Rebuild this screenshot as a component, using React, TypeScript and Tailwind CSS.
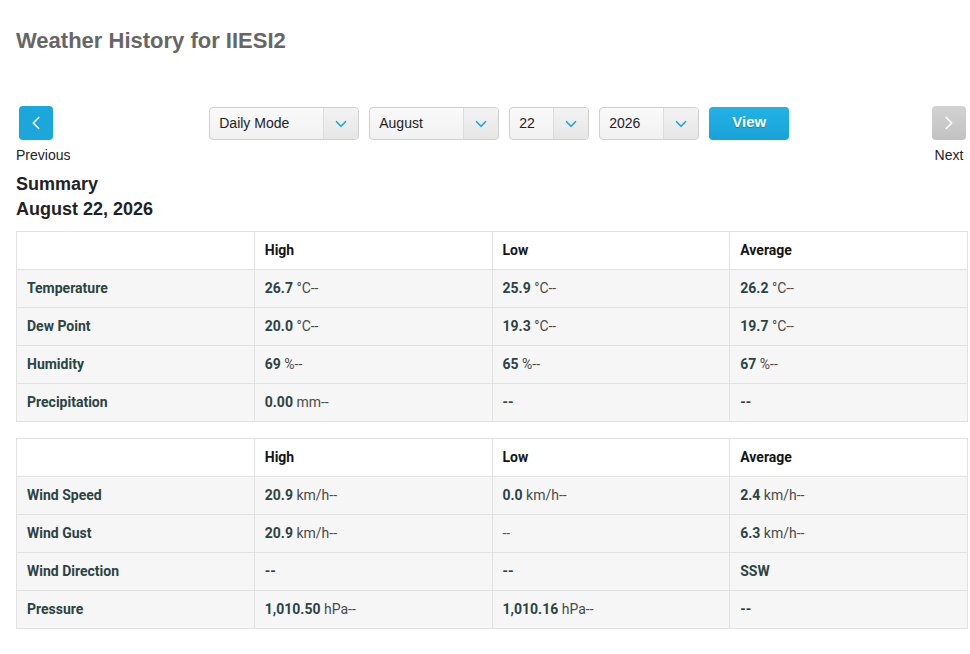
import { ChevronLeft, ChevronRight, ChevronDown } from 'lucide-react'

type Cell = { v?: string; u?: string; dash?: 'bold' | 'thin' }

const table1: { label: string; cells: Cell[] }[] = [
  { label: 'Temperature', cells: [{ v: '26.7', u: '°C--' }, { v: '25.9', u: '°C--' }, { v: '26.2', u: '°C--' }] },
  { label: 'Dew Point', cells: [{ v: '20.0', u: '°C--' }, { v: '19.3', u: '°C--' }, { v: '19.7', u: '°C--' }] },
  { label: 'Humidity', cells: [{ v: '69', u: '%--' }, { v: '65', u: '%--' }, { v: '67', u: '%--' }] },
  { label: 'Precipitation', cells: [{ v: '0.00', u: 'mm--' }, { dash: 'bold' }, { dash: 'bold' }] },
]

const table2: { label: string; cells: Cell[] }[] = [
  { label: 'Wind Speed', cells: [{ v: '20.9', u: 'km/h--' }, { v: '0.0', u: 'km/h--' }, { v: '2.4', u: 'km/h--' }] },
  { label: 'Wind Gust', cells: [{ v: '20.9', u: 'km/h--' }, { dash: 'thin' }, { v: '6.3', u: 'km/h--' }] },
  { label: 'Wind Direction', cells: [{ dash: 'bold' }, { dash: 'bold' }, { v: 'SSW' }] },
  { label: 'Pressure', cells: [{ v: '1,010.50', u: 'hPa--' }, { v: '1,010.16', u: 'hPa--' }, { dash: 'bold' }] },
]

function Select({ label, width }: { label: string; width: string }) {
  return (
    <div
      className={`flex h-[33px] ${width} items-stretch overflow-hidden rounded-[4px] border border-[#cfcfcf] bg-gradient-to-b from-[#fafafa] to-[#f1f1f1] text-[14px] text-[#222]`}
    >
      <div className="flex flex-1 items-center pl-[9px]">{label}</div>
      <div className="flex w-[35px] items-center justify-center border-l border-[#dcdcdc] bg-gradient-to-b from-[#f3f3f3] to-[#e6e6e6]">
        <ChevronDown className="h-[18px] w-[18px] text-[#1ba6dc]" strokeWidth={2.2} />
      </div>
    </div>
  )
}

function ValueCell({ c }: { c: Cell }) {
  if (c.dash === 'bold') return <span className="font-bold text-[#2c4343]">--</span>
  if (c.dash === 'thin') return <span className="text-[#555]">--</span>
  return (
    <>
      <span className="font-bold text-[#2c4343]">{c.v}</span>
      {c.u && <span className="text-[#4a4a4a]"> {c.u}</span>}
    </>
  )
}

function DataTable({ rows }: { rows: { label: string; cells: Cell[] }[] }) {
  return (
    <table className="w-[952px] table-fixed border-collapse font-['Roboto',sans-serif] text-[14px]">
      <thead>
        <tr className="h-[38px] bg-white">
          <th className="border border-[#e2e2e2]" />
          {['High', 'Low', 'Average'].map((h) => (
            <th key={h} className="border border-[#e2e2e2] px-[10px] text-left font-bold text-[#151515]">
              {h}
            </th>
          ))}
        </tr>
      </thead>
      <tbody>
        {rows.map((r) => (
          <tr key={r.label} className="h-[38px] bg-[#f6f6f6]">
            <td className="border border-[#e2e2e2] px-[10px] font-bold text-[#2c4343]">{r.label}</td>
            {r.cells.map((c, i) => (
              <td key={i} className="border border-[#e2e2e2] px-[10px]">
                <ValueCell c={c} />
              </td>
            ))}
          </tr>
        ))}
      </tbody>
    </table>
  )
}

export default function App() {
  return (
    <div className="min-h-[654px] w-[970px] bg-white pl-4 pr-[2px] font-['Liberation_Sans',Arial,sans-serif]">
      <h1 className="pt-[27px] text-[22px] font-bold leading-[28px] text-[#666]">Weather History for IIESI2</h1>

      <div className="mt-[51px] flex items-start justify-between pr-[2px]">
        <div className="flex flex-col">
          <button className="ml-[3px] flex h-[34px] w-[34px] items-center justify-center rounded-[4px] bg-[#1ba6dc]">
            <ChevronLeft className="h-[22px] w-[22px] text-white" strokeWidth={1.8} />
          </button>
          <span className="mt-[7px] text-[14px] leading-[16px] text-[#222]">Previous</span>
        </div>

        <div className="mr-[4px] flex items-center gap-[10px] pt-px">
          <Select label="Daily Mode" width="w-[150px]" />
          <Select label="August" width="w-[130px]" />
          <Select label="22" width="w-[80px]" />
          <Select label="2026" width="w-[100px]" />
          <button className="h-[33px] w-[80px] rounded-[4px] bg-gradient-to-b from-[#22b2e6] to-[#18a3d8] pb-[2px] text-[15px] font-bold text-white [text-shadow:0_1px_1px_rgba(0,0,0,0.25)]">
            View
          </button>
        </div>

        <div className="flex flex-col items-center">
          <button className="flex h-[34px] w-[34px] items-center justify-center rounded-[4px] bg-gradient-to-b from-[#d2d2d2] to-[#c2c2c2]">
            <ChevronRight className="h-[22px] w-[22px] text-white" strokeWidth={1.8} />
          </button>
          <span className="mt-[7px] text-[14px] leading-[16px] text-[#222]">Next</span>
        </div>
      </div>

      <div className="mt-[9px] text-[18px] font-bold leading-[25px] text-[#222]">
        <div>Summary</div>
        <div>August 22, 2026</div>
      </div>

      <div className="mt-[9px]">
        <DataTable rows={table1} />
      </div>
      <div className="mt-[16px]">
        <DataTable rows={table2} />
      </div>
    </div>
  )
}
